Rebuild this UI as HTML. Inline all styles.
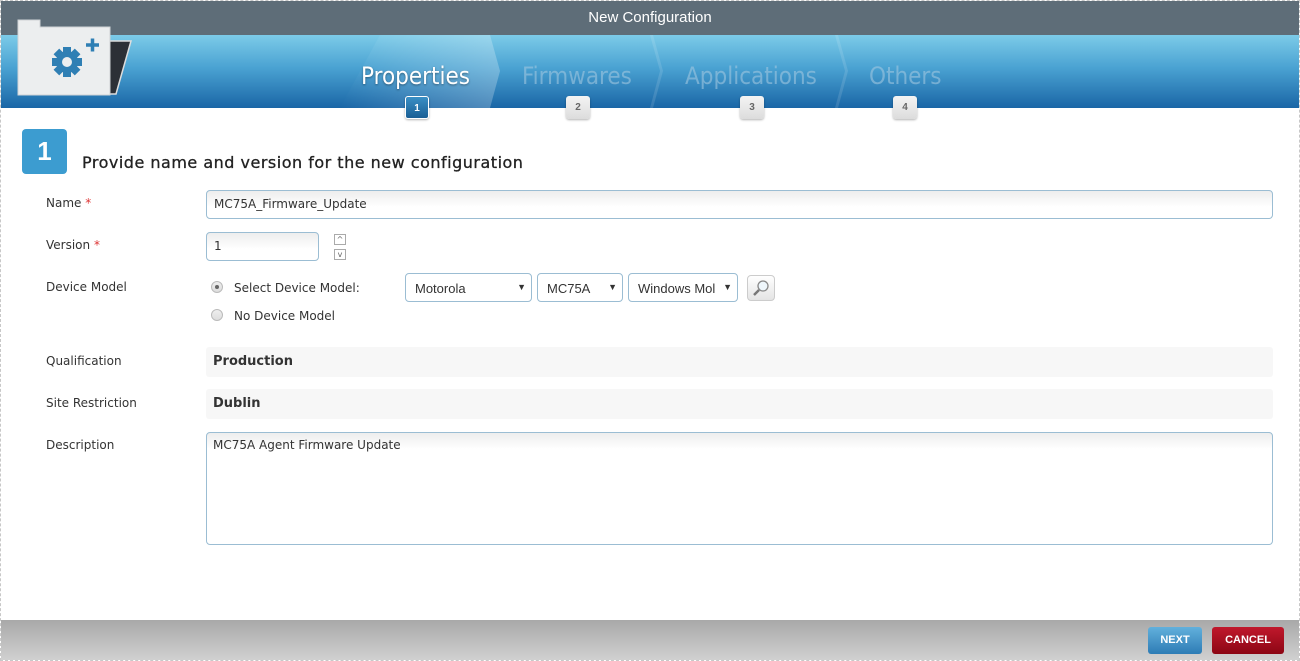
<!DOCTYPE html>
<html><head><style>
*{box-sizing:border-box;margin:0;padding:0}
body{width:1300px;height:661px;overflow:hidden;background:#fff;font-family:"DejaVu Sans","Liberation Sans",sans-serif;font-size:12px;color:#333;position:relative}
.frame{position:absolute;left:0;top:0;width:1300px;height:661px;border:1px dashed #c8c8c8}
.top{position:absolute;left:1px;top:1px;width:1298px;height:34px;background:#5e6d78;color:#fff;text-align:center;font:15px/34px "Liberation Sans",sans-serif}
.band{position:absolute;left:1px;top:35px;width:1298px;height:73px;background:linear-gradient(#7ccbe8,#4aa2d2 45%,#1a66a6)}
.step{position:absolute;top:62px;font:24px "DejaVu Sans Condensed","DejaVu Sans",sans-serif;color:rgba(160,198,224,.6)}
.num{position:absolute;top:96px;width:24px;height:23px;border-radius:3px;background:linear-gradient(#f4f4f4,#dcdcdc);color:#666;font:bold 10px/23px "Liberation Sans",sans-serif;text-align:center;box-shadow:0 1px 2px rgba(0,0,0,.3)}
.lbl{position:absolute;left:46px;top:0}
.inp{position:absolute;border:1px solid #9bbdd3;border-radius:4px;background:linear-gradient(#ededed,#fff 16px);padding-left:7px}
.ro{position:absolute;left:206px;width:1067px;height:30px;background:#f7f7f7;border-radius:3px;font-weight:bold;padding:7px 7px;font-size:13px}
.sel{position:absolute;top:273px;height:29px;border:1px solid #9bbdd3;border-radius:4px;background:#fff;padding:7px 9px;font:13px "Liberation Sans",sans-serif}
.sel:after{content:"▼";position:absolute;right:5px;top:8px;font-size:9px}
.radio{position:absolute;left:211px;width:12px;height:12px;border-radius:50%;border:1px solid #bbb;background:linear-gradient(#eee,#ddd)}
.req{color:#d33}
.btn{position:absolute;top:627px;height:27px;border-radius:3px;color:#fff;font:bold 11px/27px "Liberation Sans",sans-serif;text-align:center}
</style></head><body>
<div class="frame"></div>
<div class="top">New Configuration</div>
<div class="band"></div>
<svg style="position:absolute;left:0;top:35px" width="1300" height="73">
<defs><linearGradient id="h" x1="0" x2="1"><stop offset="0" stop-color="#fff" stop-opacity="0"/><stop offset="1" stop-color="#fff" stop-opacity="0.25"/></linearGradient></defs>
<polygon points="380,0 490,0 500,36 490,73 340,73" fill="url(#h)"/>
<polygon points="650,0 660,36 650,73 653,73 663,36 653,0" fill="rgba(255,255,255,0.12)"/>
<polygon points="835,0 845,36 835,73 838,73 848,36 838,0" fill="rgba(255,255,255,0.12)"/>
</svg>
<svg style="position:absolute;left:0;top:0" width="140" height="100">
<polygon points="100,41 131,41 116,94 100,94" fill="#2c3036" stroke="#ddd" stroke-width="1.5"/>
<path d="M18,20 H40 V27 H110 V95 H18 Z" fill="#eceeef" stroke="#cfd3d6"/>
<g transform="translate(67,62)" fill="#2f7fb4">
<circle r="11"/>
<rect x="-4" y="-15" width="8" height="30"/><rect x="-15" y="-4" width="30" height="8"/><rect x="-4" y="-15" width="8" height="30" transform="rotate(45)"/><rect x="-4" y="-15" width="8" height="30" transform="rotate(-45)"/>
<circle r="5" fill="#eceeef"/></g>
<path d="M86,45 h13 M92.5,38.5 v13" stroke="#2f7fb4" stroke-width="3.5"/>
</svg>
<div class="step" style="left:361px;color:#fff;text-shadow:0 1px 2px rgba(0,0,0,.4)">Properties</div>
<div class="step" style="left:522px">Firmwares</div>
<div class="step" style="left:685px">Applications</div>
<div class="step" style="left:869px">Others</div>
<div class="num" style="left:405px;background:linear-gradient(#3a8fc5,#1a5f95);color:#fff;border:1px solid #fff">1</div>
<div class="num" style="left:566px">2</div>
<div class="num" style="left:740px">3</div>
<div class="num" style="left:893px">4</div>
<div style="position:absolute;left:22px;top:129px;width:45px;height:45px;background:#3c9cd0;border-radius:4px;color:#fff;font:bold 26px/45px 'Liberation Sans',sans-serif;text-align:center">1</div>
<div style="position:absolute;left:82px;top:153px;font-size:16px;color:#222;letter-spacing:0.5px;-webkit-text-stroke:0.3px #222">Provide name and version for the new configuration</div>
<div class="lbl" style="top:196px">Name <span class="req">*</span></div>
<div class="inp" style="left:206px;top:190px;width:1067px;height:29px;line-height:27px">MC75A_Firmware_Update</div>
<div class="lbl" style="top:238px">Version <span class="req">*</span></div>
<div class="inp" style="left:206px;top:232px;width:113px;height:29px;line-height:27px">1</div>
<div style="position:absolute;left:334px;top:234px;width:12px;height:11px;border:1px solid #aaa;font-size:8px;line-height:9px;text-align:center;color:#666">^</div>
<div style="position:absolute;left:334px;top:249px;width:12px;height:11px;border:1px solid #aaa;font-size:8px;line-height:9px;text-align:center;color:#666">v</div>
<div class="lbl" style="top:280px">Device Model</div>
<div class="radio" style="top:281px"><div style="margin:3px;width:4px;height:4px;border-radius:50%;background:#666"></div></div>
<div style="position:absolute;left:234px;top:281px">Select Device Model:</div>
<div class="radio" style="top:309px"></div>
<div style="position:absolute;left:234px;top:309px">No Device Model</div>
<div class="sel" style="left:405px;width:127px">Motorola</div>
<div class="sel" style="left:537px;width:86px">MC75A</div>
<div class="sel" style="left:628px;width:110px">Windows Mol</div>
<div style="position:absolute;left:747px;top:275px;width:28px;height:26px;border:1px solid #ccc;border-radius:4px;background:linear-gradient(#fff,#e4e4e4)">
<svg width="26" height="24"><circle cx="15" cy="10" r="5" fill="#eef6fb" stroke="#888" stroke-width="1.3"/><path d="M11,14 L6,19" stroke="#777" stroke-width="2.5"/></svg></div>
<div class="lbl" style="top:354px">Qualification</div>
<div class="ro" style="top:347px">Production</div>
<div class="lbl" style="top:396px">Site Restriction</div>
<div class="ro" style="top:389px">Dublin</div>
<div class="lbl" style="top:438px">Description</div>
<div class="inp" style="left:206px;top:432px;width:1067px;height:113px;padding:5px 6px">MC75A Agent Firmware Update</div>
<div style="position:absolute;left:1px;top:620px;width:1298px;height:40px;background:linear-gradient(#a8a8a8,#d0d0d0)"></div>
<div class="btn" style="left:1148px;width:54px;background:linear-gradient(#62b0dc,#2d7cb5)">NEXT</div>
<div class="btn" style="left:1212px;width:72px;background:linear-gradient(#c0182c,#8c0614)">CANCEL</div>
</body></html>
